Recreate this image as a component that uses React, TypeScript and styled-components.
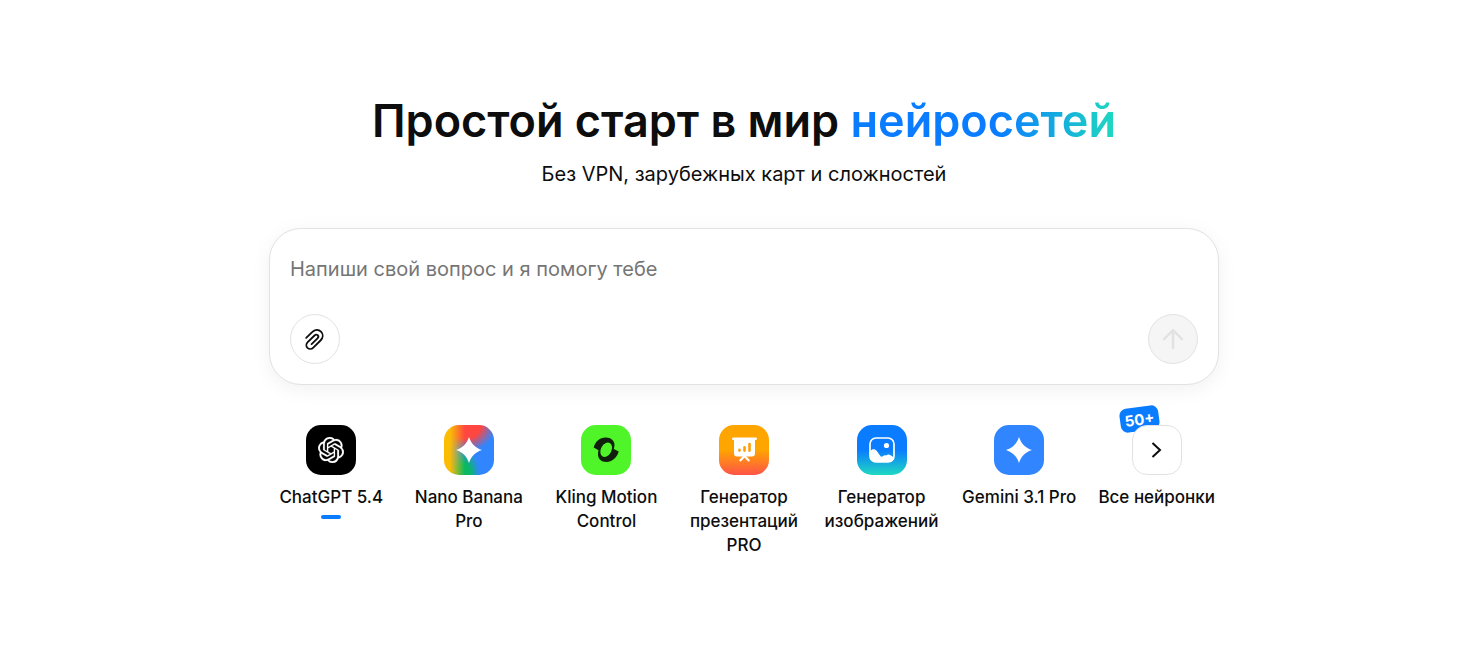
import React from "react";
import styled, { createGlobalStyle, css } from "styled-components";
import { SiOpenai } from "react-icons/si";

const GlobalStyle = createGlobalStyle`
  *, *::before, *::after { box-sizing: border-box; }
  body {
    margin: 0;
    background: #fff;
    color: #0d0d0d;
    font-family: Inter, "Liberation Sans", sans-serif;
  }
  button, textarea { font: inherit; color: inherit; }
`;

const Page = styled.main`
  display: flex;
  flex-direction: column;
  align-items: center;
  padding: 92px 0 40px 19px;
`;

const Title = styled.h1`
  margin: 0;
  font-size: 45px;
  line-height: 58px;
  font-weight: 600;
  text-align: center;
`;

const Accent = styled.span`
  background: linear-gradient(90deg, #0a7cff 55%, #1fd9c0 100%);
  background-clip: text;
  -webkit-background-clip: text;
  color: transparent;
`;

const Subtitle = styled.p`
  margin: 8px 0 0;
  font-size: 20px;
  line-height: 32px;
  text-align: center;
`;

const Prompt = styled.form`
  display: flex;
  flex-direction: column;
  gap: 20px;
  width: 100%;
  max-width: 950px;
  margin-top: 38px;
  padding: 20px;
  border: 1px solid #e2e2e2;
  border-radius: 32px;
  background: #fff;
  box-shadow: 0 4px 20px rgba(0, 0, 0, 0.06);
`;

const PromptField = styled.textarea`
  display: block;
  width: 100%;
  height: 45px;
  padding: 5px 0;
  border: 0;
  outline: 0;
  resize: none;
  background: transparent;
  font-size: 20px;
  line-height: 30px;
  &::placeholder { color: #757575; opacity: 1; }
`;

const PromptActions = styled.div`
  display: flex;
  justify-content: space-between;
`;

const RoundButton = styled.button<{ $muted?: boolean }>`
  display: flex;
  align-items: center;
  justify-content: center;
  width: 50px;
  height: 50px;
  padding: 0;
  border: 1px solid #e2e2e2;
  border-radius: 50%;
  background: ${(p) => (p.$muted ? "#f5f5f5" : "#fff")};
  color: ${(p) => (p.$muted ? "#e2e2e2" : "#0d0d0d")};
`;

const Models = styled.nav`
  display: grid;
  grid-template-columns: repeat(7, minmax(0, 1fr));
  gap: 13px;
  width: 100%;
  max-width: 950px;
  margin-top: 40px;
`;

const ModelButton = styled.button<{ $active?: boolean }>`
  display: flex;
  flex-direction: column;
  align-items: center;
  justify-content: flex-start;
  gap: 10px;
  padding: 0;
  border: 0;
  background: none;
  font-size: 17px;
  line-height: 24px;
  font-weight: 500;
  cursor: pointer;
  ${(p) =>
    p.$active &&
    css`
      &::after {
        content: "";
        width: 20px;
        height: 4px;
        margin-top: -4px;
        border-radius: 2px;
        background: #0a7cff;
      }
    `}
`;

const Tile = styled.span<{ $fill: string; $outlined?: boolean }>`
  position: relative;
  display: flex;
  align-items: center;
  justify-content: center;
  width: 50px;
  height: 50px;
  border: ${(p) => (p.$outlined ? "1px solid #e2e2e2" : "0")};
  border-radius: 15px;
  background: ${(p) => p.$fill};
  color: #fff;
`;

const TileWrap = styled.span`
  position: relative;
  display: block;
`;

const Badge = styled.span`
  position: absolute;
  top: -18px;
  left: -12px;
  width: 39px;
  height: 24px;
  border-radius: 7px;
  background: #0a7cff;
  color: #fff;
  font-size: 15px;
  line-height: 25px;
  font-weight: 700;
  text-align: center;
  transform: rotate(-8deg);
`;

const ClipIcon = () => (
  <svg width="24" height="24" viewBox="0 0 24 24" fill="none" stroke="currentColor" strokeWidth="1.8" strokeLinecap="round" strokeLinejoin="round" aria-hidden="true">
    <path d="M3.200 10.800l5.900-5.600c2.800-2.800 6.500-2.900 8.900-.6 2.400 2.400 2.300 6.100-.5 8.900l-7.200 7.100c-1.700 1.700-4.200 1.800-5.800.3-1.600-1.600-1.500-4.100.2-5.800l6.800-6.600c1-1 2.300-1.100 3.200-.3.900.9.800 2.200-.2 3.200l-5.900 5.700" />
  </svg>
);

const ArrowUp = () => (
  <svg width="24" height="24" viewBox="0 0 24 24" fill="none" stroke="currentColor" strokeWidth="2.500" strokeLinecap="round" strokeLinejoin="round" aria-hidden="true">
    <path d="M12 21V3.500M3 12.200l9-9 9 9" />
  </svg>
);

const Spark = () => (
  <svg width="26" height="26" viewBox="0 0 26 26" fill="#fff" aria-hidden="true">
    <path d="M13 0c2 6.500 6.500 11 13 13-6.500 2-11 6.500-13 13-2-6.500-6.500-11-13-13 6.500-2 11-6.500 13-13z" />
  </svg>
);

const KlingIcon = () => (
  <svg width="50" height="50" viewBox="0 0 50 50" aria-hidden="true">
    <path
      fill="#10200c"
      d="M12.700 22.500C14.500 16 19 12.300 25 12.500c5 .2 8.500 3 8.500 7.500 0 1.500-.4 2.800-.7 4l4.900 2.500C36 32.500 31 37 25.500 37 20 37 17 33.800 17 29c0-1.500.2-2.500.5-3.800z"
    />
    <ellipse cx="25.200" cy="24.700" rx="5.300" ry="7.600" transform="rotate(28 25.200 24.700)" fill="#50f529" />
  </svg>
);

const SlidesIcon = () => (
  <svg width="50" height="50" viewBox="0 0 50 50" fill="none" strokeLinecap="round" aria-hidden="true">
    <path d="M15 13.500h21V28.500q0 3-3 3H18q-3 0-3-3z" fill="#fff" />
    <path d="M14.200 13.800h22.600M25.500 31l-4 4.300M25.500 31l4 4.300" stroke="#fff" strokeWidth="2.400" />
    <path d="M20.500 24.800v.8M25.500 22.300v3.300M30.500 19v6.600" stroke="#ff9d0a" strokeWidth="2.600" />
  </svg>
);

const PictureIcon = () => (
  <svg width="50" height="50" viewBox="0 0 50 50" fill="#fff" aria-hidden="true">
    <rect x="13" y="13" width="24" height="24" rx="6" fill="none" stroke="#fff" strokeWidth="1.700" />
    <circle cx="29.500" cy="20.500" r="2.600" />
    <path d="M13 26c2.500-2.500 5-2.300 6.800 0l3.700 5.200c.7.700 1.800.6 2.600-.1 1-.9 1.900-1.300 3-.6 1.700-1.500 3-1.400 4.500-.2L37 32.500q-.5 4.500-5 4.500H19q-6 0-6-6z" />
  </svg>
);

const Chevron = () => (
  <svg width="20" height="20" viewBox="0 0 20 20" fill="none" stroke="#0d0d0d" strokeWidth="2" aria-hidden="true">
    <path d="M5.500 3l7.500 7-7.500 7" />
  </svg>
);

const nanoFill = [
  "linear-gradient(90deg, #fbbc04 12%, rgba(251, 188, 4, 0) 42%)",
  "radial-gradient(ellipse 31px 27px at 42% 0%, #ff4640 50%, rgba(255, 70, 64, 0) 100%)",
  "radial-gradient(ellipse 17px 28px at 38% 100%, #08b962 40%, rgba(8, 185, 98, 0) 100%)",
  "#3186ff",
].join(", ");

const models = [
  { name: "ChatGPT 5.4", fill: "#000", icon: <SiOpenai size={26} stroke="currentColor" strokeWidth={0.2} /> },
  { name: "Nano Banana Pro", fill: nanoFill, icon: <Spark /> },
  { name: "Kling Motion Control", fill: "#50f529", icon: <KlingIcon /> },
  { name: "Генератор презентаций PRO", fill: "linear-gradient(180deg, #ffa500 0 50%, #ff5349 100%)", icon: <SlidesIcon /> },
  { name: "Генератор изображений", fill: "linear-gradient(180deg, #0a7cff 0 50%, #1fd9c0 100%)", icon: <PictureIcon /> },
  { name: "Gemini 3.1 Pro", fill: "#3186ff", icon: <Spark /> },
];

export default function App() {
  return (
    <>
      <GlobalStyle />
      <Page>
        <Title>
          Простой старт в мир <Accent>нейросетей</Accent>
        </Title>
        <Subtitle>Без VPN, зарубежных карт и сложностей</Subtitle>
        <Prompt onSubmit={(e) => e.preventDefault()}>
          <PromptField aria-label="Вопрос" placeholder="Напиши свой вопрос и я помогу тебе" />
          <PromptActions>
            <RoundButton type="button" aria-label="Прикрепить файл">
              <ClipIcon />
            </RoundButton>
            <RoundButton type="submit" $muted disabled aria-label="Отправить">
              <ArrowUp />
            </RoundButton>
          </PromptActions>
        </Prompt>
        <Models aria-label="Нейросети">
          {models.map((m, i) => (
            <ModelButton key={m.name} type="button" $active={i === 0}>
              <Tile $fill={m.fill}>{m.icon}</Tile>
              <span>{m.name}</span>
            </ModelButton>
          ))}
          <ModelButton type="button">
            <TileWrap>
              <Badge>50+</Badge>
              <Tile $fill="#fff" $outlined>
                <Chevron />
              </Tile>
            </TileWrap>
            <span>Все нейронки</span>
          </ModelButton>
        </Models>
      </Page>
    </>
  );
}
